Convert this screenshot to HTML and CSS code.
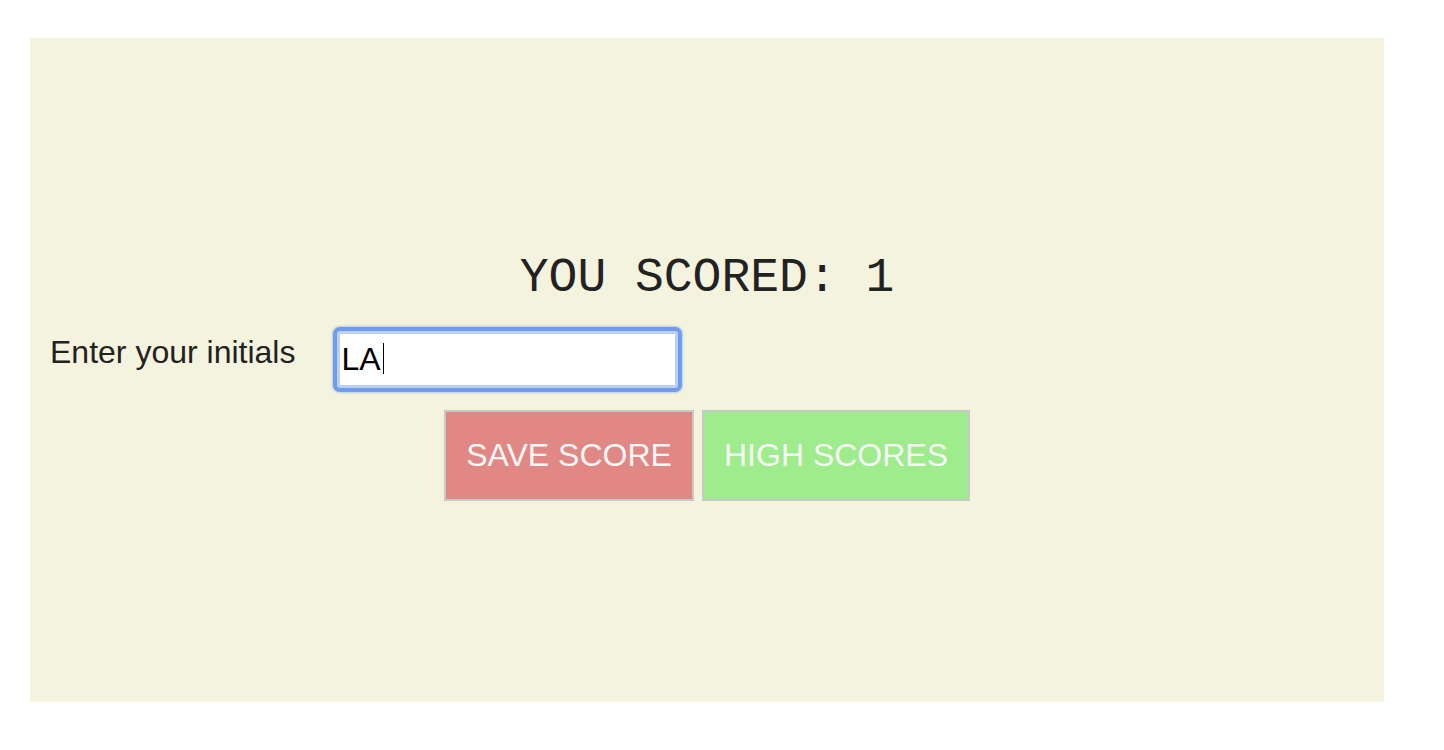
FILE: index.html
```html
<!DOCTYPE html>
<html lang="en">
<head>
<meta charset="utf-8">
<title>Quiz Score</title>
<link rel="stylesheet" href="styles.css">
</head>
<body>
<main class="panel">
  <h1 class="title">YOU SCORED: 1</h1>
  <div class="row">
    <label class="label" for="initials">Enter your initials</label>
    <span class="field-wrap">
      <input class="field" id="initials" type="text" value="LA">
      <span class="caret" aria-hidden="true"></span>
    </span>
  </div>
  <div class="actions">
    <button class="btn btn-save" type="button">SAVE SCORE</button>
    <button class="btn btn-high" type="button">HIGH SCORES</button>
  </div>
</main>
</body>
</html>
```

FILE: styles.css
```css
html, body {
  margin: 0;
  padding: 0;
  background: #ffffff;
}

.panel {
  margin: 38px 60px 0 30px;
  height: 664px;
  box-sizing: border-box;
  padding: 213px 20px 0;
  background: #f4f4de;
  font-family: "Liberation Sans", Arial, sans-serif;
  color: #222222;
}

.title {
  margin: 0;
  font-family: "Courier New", "Liberation Mono", monospace;
  font-weight: normal;
  font-size: 48px;
  line-height: 54px;
  text-align: center;
  color: #222222;
}

.row {
  display: flex;
  align-items: flex-start;
  margin-top: 26px;
}

.label {
  margin-top: 3px;
  margin-right: 42px;
  font-size: 32px;
  line-height: 37px;
  color: #222222;
}

.field-wrap {
  position: relative;
  display: block;
}

.field {
  display: block;
  box-sizing: border-box;
  width: 341px;
  height: 57px;
  margin: 0;
  padding: 0 0 0 1px;
  border: 3px solid #bcd0f4;
  border-radius: 3px;
  outline: none;
  box-shadow: 0 0 0 4px #6f9dec, 0 0 2px 5px rgba(111, 157, 236, 0.45);
  background: #ffffff;
  font-family: "Liberation Sans", Arial, sans-serif;
  font-size: 32px;
  line-height: 37px;
  color: #000000;
}

.caret {
  position: absolute;
  left: 46px;
  top: 12px;
  width: 1px;
  height: 31px;
  background: #000000;
}

.actions {
  display: flex;
  justify-content: center;
  gap: 8px;
  margin-top: 22px;
}

.btn {
  box-sizing: border-box;
  height: 91px;
  margin: 0;
  padding: 25px 0;
  border: 2px solid #c8c8c8;
  border-radius: 0;
  font-family: "Liberation Sans", Arial, sans-serif;
  font-size: 32px;
  line-height: 37px;
  color: #f7f7f7;
  cursor: pointer;
}

.btn-save {
  width: 250px;
  background: #e18784;
}

.btn-high {
  width: 268px;
  background: #9eec8c;
}
```
